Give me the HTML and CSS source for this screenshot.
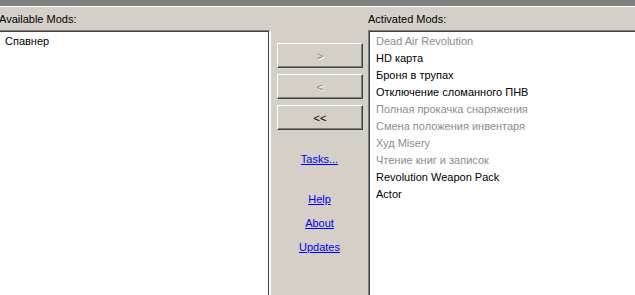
FILE: index.html
```html
<!DOCTYPE html>
<html lang="ru">
<head>
  <meta charset="UTF-8" />
  <title>Mod Manager</title>
  <link rel="stylesheet" href="styles.css">
</head>
<body>
  <div class="topbar"></div>

  <div class="main">
    <div class="column left">
      <div class="label shifted">Available Mods:</div>
      <div class="listbox">
        <div class="item">Спавнер</div>
      </div>
    </div>

    <div class="middle">
      <button class="btn" disabled>&gt;</button>
      <button class="btn" disabled>&lt;</button>
      <button class="btn">&lt;&lt;</button>

      <a href="#" class="link tasks">Tasks...</a>
      <a href="#" class="link help">Help</a>
      <a href="#" class="link">About</a>
      <a href="#" class="link">Updates</a>
    </div>

    <div class="column right">
      <div class="label">Activated Mods:</div>
      <div class="listbox">
        <div class="item off">Dead Air Revolution</div>
        <div class="item">HD карта</div>
        <div class="item">Броня в трупах</div>
        <div class="item">Отключение сломанного ПНВ</div>
        <div class="item off">Полная прокачка снаряжения</div>
        <div class="item off">Смена положения инвентаря</div>
        <div class="item off">Худ Misery</div>
        <div class="item off">Чтение книг и записок</div>
        <div class="item">Revolution Weapon Pack</div>
        <div class="item">Actor</div>
      </div>
    </div>
  </div>
</body>
</html>
```

FILE: styles.css
```css
body {
  margin: 0;
  height: 295px;
  overflow: hidden;
  background: #d4d0c8;
  font-family: 'Liberation Sans', Arial, sans-serif;
  font-size: 11px;
  color: #000;
  display: flex;
  flex-direction: column;
}

.topbar {
  height: 6px;
  background: #808080;
  border-bottom: 1px solid #fff;
}

.main {
  flex: 1;
  display: flex;
  min-height: 0;
}

.column {
  display: flex;
  flex-direction: column;
}

.left {
  width: 271px;
}

.right {
  flex: 1;
}

.label {
  height: 23px;
  line-height: 25px;
}

.label.shifted {
  margin-left: -1px;
}

.listbox {
  flex: 1;
  background: #fff;
}

.left .listbox {
  border-top: 1px solid #808080;
  border-right: 2px solid #fff;
  box-shadow: inset -1px 1px 0 #404040;
  padding: 2px 5px 0;
}

.right .listbox {
  border-top: 1px solid #808080;
  border-left: 1px solid #808080;
  box-shadow: inset 1px 1px 0 #404040;
  padding: 2px 0 0 7px;
}

.item {
  height: 17px;
  line-height: 17px;
  white-space: nowrap;
}

.item.off {
  color: #8c8c8c;
}

.middle {
  width: 97px;
  display: flex;
  flex-direction: column;
  align-items: center;
  padding-top: 36px;
}

.btn {
  width: 86px;
  height: 25px;
  margin: 0 0 6px 1px;
  background: #d4d0c8;
  font-family: inherit;
  font-size: 11px;
  color: #000;
  border: 1px solid;
  border-color: #fff #404040 #404040 #fff;
  box-shadow: inset -1px -1px 0 #808080;
  padding: 0;
}

.btn:disabled {
  color: #808080;
  text-shadow: 1px 1px 0 #fff;
}

.link {
  color: #0000ff;
  text-decoration: underline;
  line-height: 14px;
  margin-bottom: 10px;
}

.link.tasks {
  margin-top: 16px;
  margin-bottom: 26px;
}
```
